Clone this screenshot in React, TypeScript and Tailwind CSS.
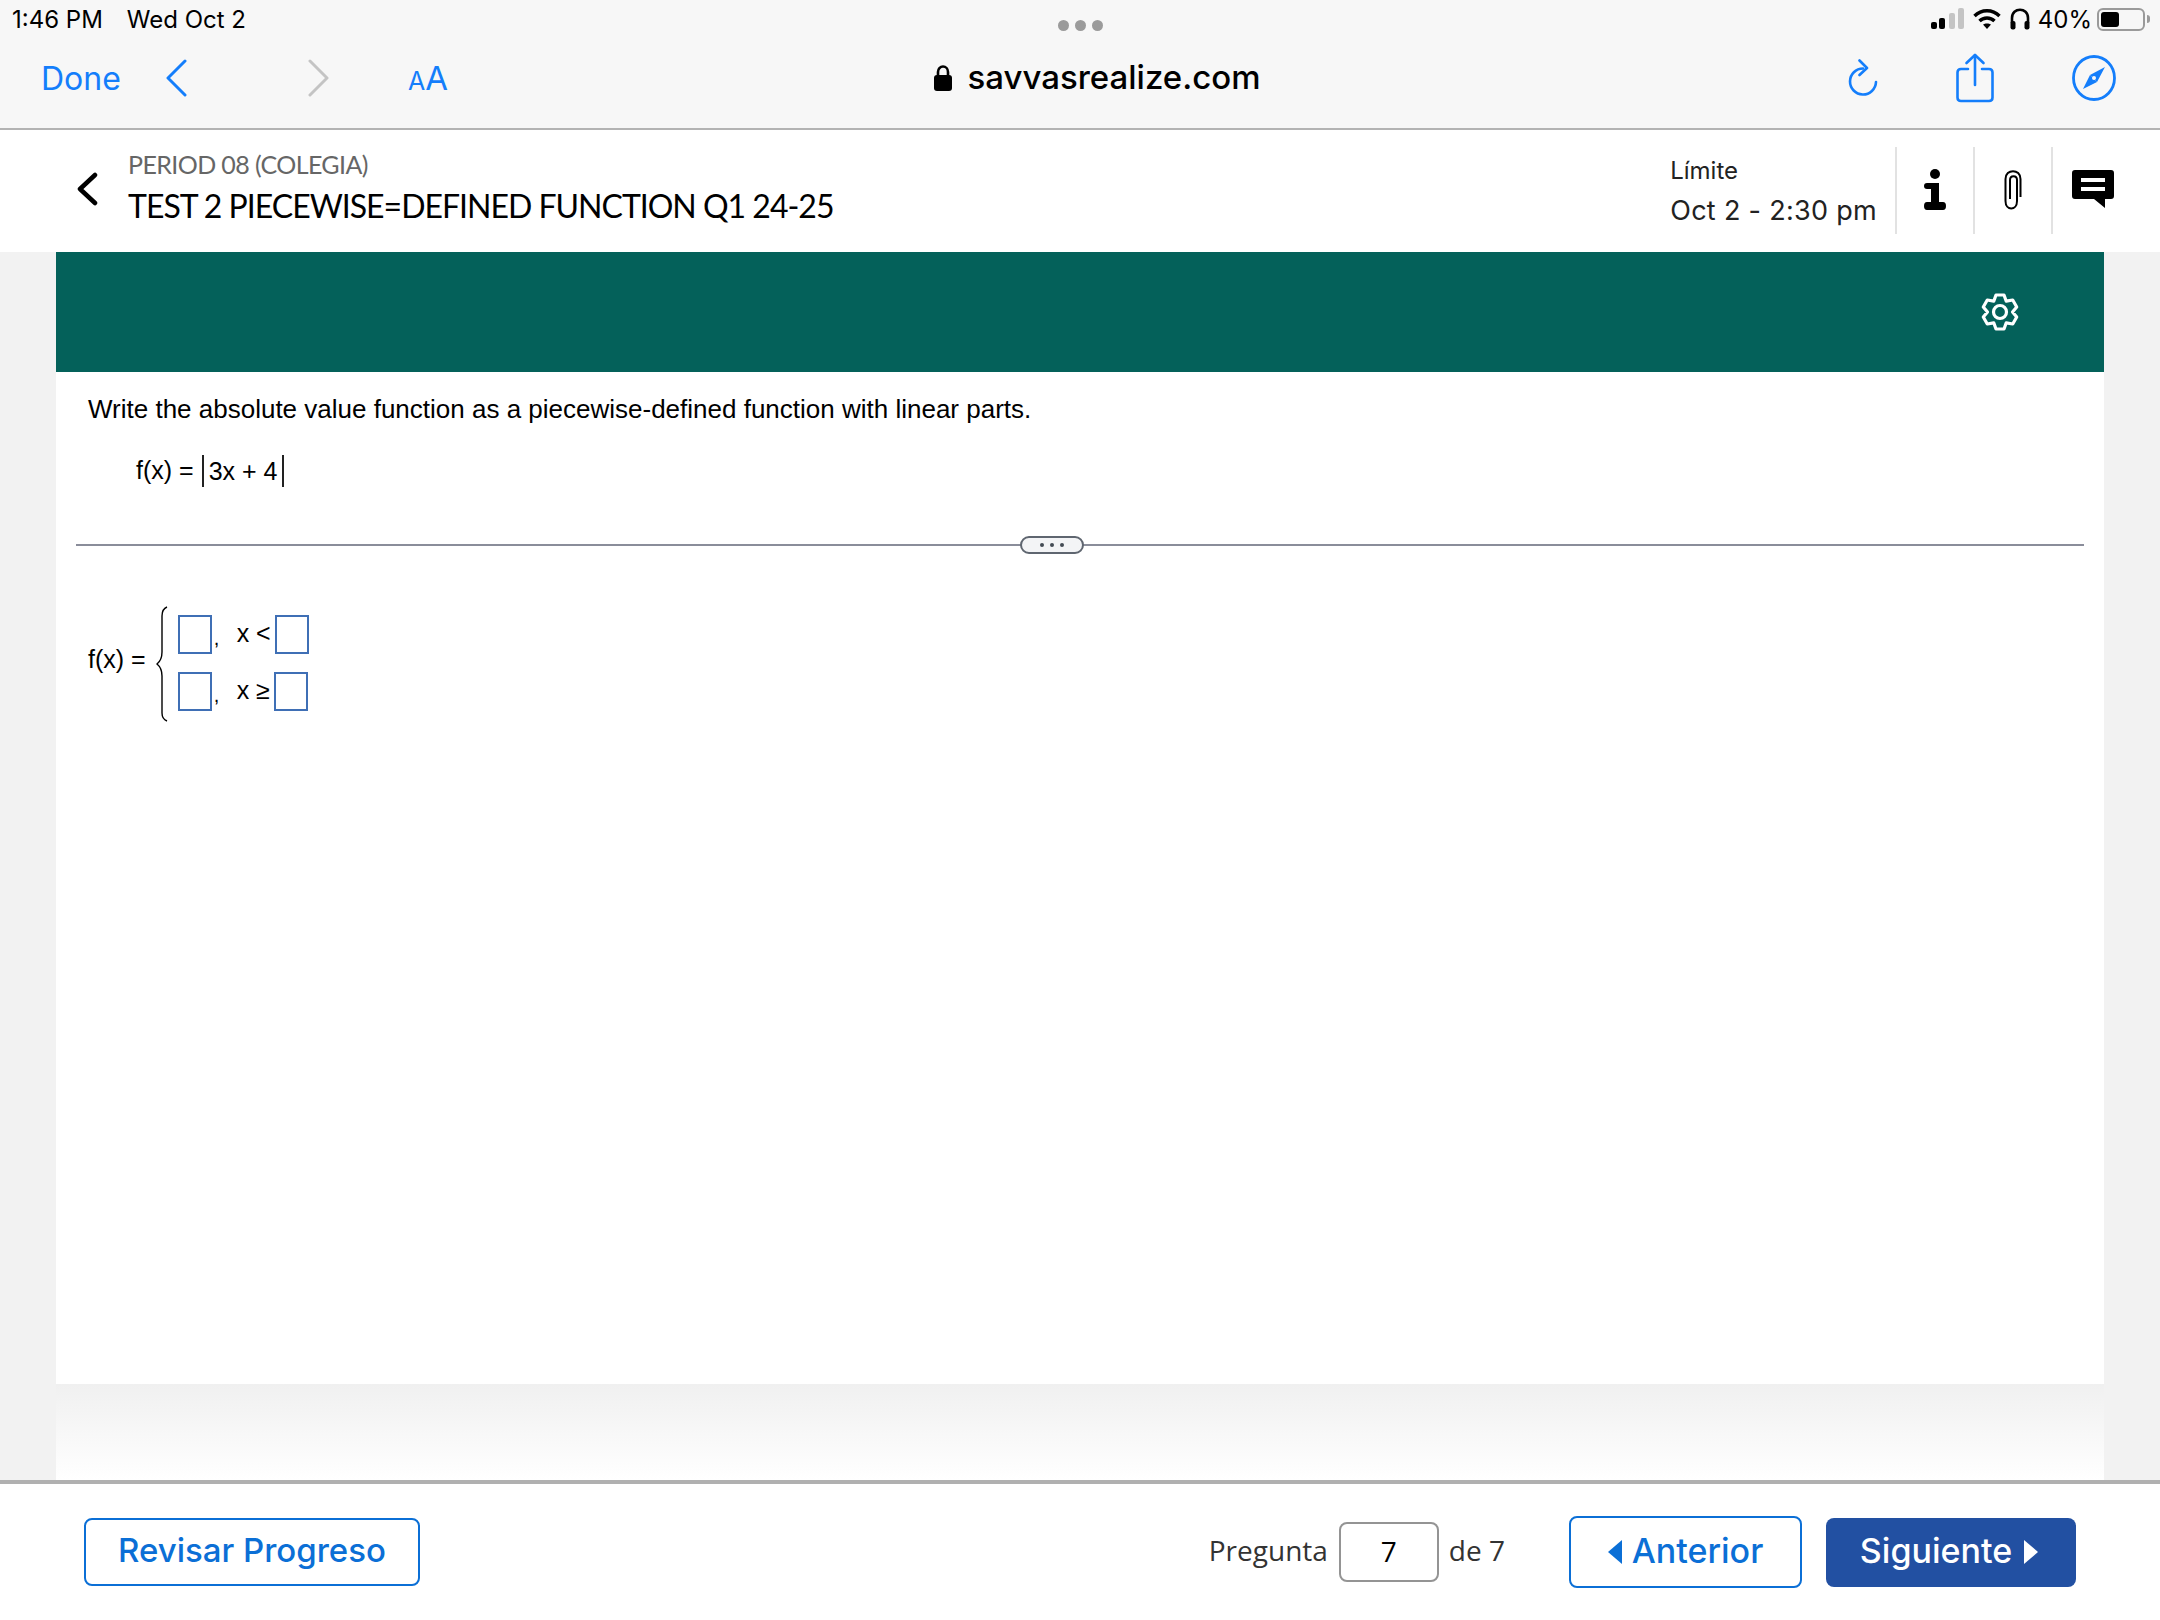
import React from 'react'

const Signal = () => (
  <svg width="33" height="22" viewBox="0 0 33 22">
    <rect x="0" y="14" width="6" height="7" rx="2" fill="#000" />
    <rect x="8" y="10" width="6" height="11" rx="2" fill="#000" />
    <rect x="18" y="5" width="6" height="16" rx="2" fill="#c4c4c4" />
    <rect x="27" y="0" width="6" height="21" rx="2" fill="#c4c4c4" />
  </svg>
)

const Wifi = () => (
  <svg width="28" height="22" viewBox="0 0 28 22" fill="none" stroke="#000" strokeWidth="3.4">
    <path d="M1.5 8 C8.5 1 19.5 1 26.5 8" />
    <path d="M6.5 13 C10.5 9 17.5 9 21.5 13" />
    <path d="M14 21 L10 16.5 C12 15 16 15 18 16.5 Z" fill="#000" stroke="none" />
  </svg>
)

const Headphones = () => (
  <svg width="20" height="22" viewBox="0 0 20 22" fill="none">
    <path d="M2 15 V10 C2 -1 18 -1 18 10 V15" stroke="#000" strokeWidth="2.6" />
    <rect x="0.5" y="13" width="5" height="8.5" rx="2" fill="#000" />
    <rect x="14.5" y="13" width="5" height="8.5" rx="2" fill="#000" />
  </svg>
)

const Battery = () => (
  <div className="-ml-[4px] flex items-center gap-[2px]">
    <div className="h-[23px] w-[48px] rounded-[6px] border-2 border-[#9a9a9a] p-[2px]">
      <div className="h-full w-[18px] rounded-[3px] bg-black" />
    </div>
    <div className="h-[8px] w-[3px] rounded-r-full bg-[#9a9a9a]" />
  </div>
)

const Reload = () => (
  <svg width="30" height="38" viewBox="0 0 30 38" fill="none" stroke="#147efb" strokeWidth="2.6" strokeLinecap="round" strokeLinejoin="round">
    <path d="M15 9.5 A13 13 0 1 0 28 23" />
    <path d="M11.5 1.5 L19 9 L11.5 16" />
  </svg>
)

const Share = () => (
  <svg width="38" height="50" viewBox="0 0 38 50" fill="none" stroke="#147efb" strokeWidth="2.6" strokeLinecap="round" strokeLinejoin="round">
    <path d="M12 16 H5 Q1.5 16 1.5 19.5 V44.5 Q1.5 48 5 48 H33 Q36.500 48 36.500 44.500 V19.500 Q36.500 16 33 16 H26" />
    <path d="M19 32 V2" />
    <path d="M10.500 10 L19 2 L27.500 10" />
  </svg>
)

const Compass = () => (
  <svg width="44" height="46" viewBox="0 0 44 46" fill="none">
    <ellipse cx="22" cy="23" rx="20.500" ry="21.500" stroke="#147efb" strokeWidth="2.8" />
    <path d="M33 12 L25 27 L18 20 Z" fill="#147efb" />
    <path d="M11 34 L18 20 L25 27 Z" fill="#147efb" />
    <circle cx="22" cy="23" r="2" fill="#f7f7f7" />
  </svg>
)

const InfoIcon = () => (
  <svg width="22" height="42" viewBox="0 0 22 42" fill="#000">
    <circle cx="11" cy="5" r="5" />
    <path d="M3 14 H15 V33 H19 Q22 33 22 37 Q22 41 19 41 H3 Q0 41 0 37 Q0 33 3 33 H7 V20 H3 Q0 20 0 17 Q0 14 3 14 Z" />
  </svg>
)

const Clip = () => (
  <svg width="18" height="40" viewBox="0 0 18 40" fill="none" stroke="#000" strokeWidth="2">
    <path d="M16.500 27 V9 C16.500 -1.500 1.500 -1.500 1.500 9 V31 C1.500 41 13 41 13 31 V10 C13 5 6 5 6 10 V29" />
  </svg>
)

const Comment = () => (
  <svg width="42" height="38" viewBox="0 0 42 38">
    <path d="M3 0 H39 Q42 0 42 3 V26 Q42 29 39 29 H33 V38 L22 29 H3 Q0 29 0 26 V3 Q0 0 3 0 Z" fill="#000" />
    <rect x="9" y="8" width="24" height="4" fill="#fff" />
    <rect x="9" y="17" width="24" height="4" fill="#fff" />
  </svg>
)

const Gear = () => (
  <svg width="40" height="42" viewBox="0 0 40 42" fill="none" stroke="#fff" strokeWidth="3.2" strokeLinejoin="round">
    <path d="M16 4 H24 L26.250 10.180 L32.720 9.040 L36.720 15.960 L32.500 21 L36.720 26.040 L32.720 32.960 L26.250 31.820 L24 38 H16 L13.750 31.820 L7.280 32.960 L3.280 26.040 L7.500 21 L3.280 15.960 L7.280 9.040 L13.750 10.180 Z" />
    <circle cx="20" cy="21" r="6.500" />
  </svg>
)

const Brace = () => (
  <svg width="12" height="116" viewBox="0 0 12 116" fill="none" stroke="#000" strokeWidth="1.4">
    <path d="M11 1 Q6 3 6 10 V46 Q6 54 1 58 Q6 62 6 70 V107 Q6 113 11 115" />
  </svg>
)

const AnswerBox = () => <div className="h-[39px] w-[34px] border-2 border-[#3f6fb5] bg-white" />

const App = () => {
  return (
    <div className="flex h-[1620px] w-[2160px] flex-col overflow-hidden bg-white font-['Inter',sans-serif]">
      {/* safari chrome */}
      <div className="h-[130px] shrink-0 border-b-2 border-[#b3b3b3] bg-[#f7f7f7]">
        <div className="grid h-[38px] grid-cols-3 items-center pl-[12px] pr-[10px] text-[24px] text-black">
          <div className="flex gap-[24px] pt-[1px]">
            <span>1:46 PM</span>
            <span>Wed Oct 2</span>
          </div>
          <div className="flex justify-center gap-[6px] pt-[12px]">
            <span className="h-[11px] w-[11px] rounded-full bg-[#9b9b9b]" />
            <span className="h-[11px] w-[11px] rounded-full bg-[#9b9b9b]" />
            <span className="h-[11px] w-[11px] rounded-full bg-[#9b9b9b]" />
          </div>
          <div className="flex items-center justify-end gap-[9px]">
            <Signal />
            <Wifi />
            <Headphones />
            <span className="-ml-[1px] pt-[1px]">40%</span>
            <Battery />
          </div>
        </div>
        <div className="grid h-[80px] grid-cols-3 items-center pl-[41px] pr-[44px]">
          <div className="flex items-center text-[#147efb]">
            <span className="w-[124px] pt-[2px] text-[32px]">Done</span>
            <svg width="22" height="38" viewBox="0 0 22 38" fill="none" stroke="#147efb" strokeWidth="3" strokeLinecap="round" strokeLinejoin="round">
              <path d="M20 2 L3 19 L20 36" />
            </svg>
            <svg className="ml-[121px]" width="22" height="38" viewBox="0 0 22 38" fill="none" stroke="#c4c4c4" strokeWidth="3" strokeLinecap="round" strokeLinejoin="round">
              <path d="M2 2 L19 19 L2 36" />
            </svg>
            <span className="ml-[78px] flex items-baseline leading-none">
              <span className="text-[25px]">A</span>
              <span className="text-[33px]">A</span>
            </span>
          </div>
          <div className="flex items-center justify-center gap-[15px] pl-[38px] text-[33px] font-medium text-black">
            <svg width="18" height="26" viewBox="0 0 18 26">
              <path d="M4 11 V7 a5 5.500 0 0 1 10 0 V11" fill="none" stroke="#000" strokeWidth="2.6" />
              <rect x="0" y="10" width="18" height="16" rx="3" fill="#000" />
            </svg>
            <span>savvasrealize.com</span>
          </div>
          <div className="flex items-center justify-end gap-[78px]">
            <Reload />
            <Share />
            <Compass />
          </div>
        </div>
      </div>

      {/* assessment header */}
      <header className="flex h-[122px] shrink-0 items-center bg-white">
        <svg className="ml-[76px] -mt-[4px]" width="22" height="34" viewBox="0 0 22 34" fill="none" stroke="#000" strokeWidth="4.5" strokeLinecap="round" strokeLinejoin="round">
          <path d="M19 3 L4 17 L19 31" />
        </svg>
        <div className="ml-[30px] mb-[10px] flex flex-1 flex-col font-['Lato',sans-serif]">
          <span className="text-[25px] leading-[40px] tracking-[-0.6px] text-[#666666]">PERIOD 08 (COLEGIA)</span>
          <span className="text-[32px] leading-[44px] tracking-[-1px] text-black">TEST 2 PIECEWISE=DEFINED FUNCTION Q1 24-25</span>
        </div>
        <div className="mb-[10px] flex flex-col pr-[18px] text-[#222222]">
          <span className="text-[24px] leading-[50px]">Límite</span>
          <span className="text-[27px] leading-[30px] tracking-[0.3px]">Oct 2 - 2:30 pm</span>
        </div>
        <div className="flex h-[87px] -mt-[2px] w-[78px] items-center justify-center border-l-2 border-[#e2e2e2]">
          <InfoIcon />
        </div>
        <div className="flex h-[87px] -mt-[2px] w-[78px] items-center justify-center border-l-2 border-[#e2e2e2]">
          <Clip />
        </div>
        <div className="flex h-[87px] -mt-[2px] w-[109px] items-center border-l-2 border-[#e2e2e2] pb-[2px] pl-[19px]">
          <Comment />
        </div>
      </header>

      <main className="flex min-h-0 flex-1 flex-col bg-[#f2f2f2] px-[56px]">
        <div className="flex h-[120px] shrink-0 items-center justify-end bg-[#04615a] pr-[84px]">
          <Gear />
        </div>
        <section className="flex h-[1012px] shrink-0 flex-col bg-white font-['Liberation_Sans',sans-serif] text-black">
          <p className="ml-[32px] mt-[20px] text-[26px] leading-[34px]">Write the absolute value function as a piecewise-defined function with linear parts.</p>
          <div className="ml-[80px] mt-[27px] flex h-[36px] items-center text-[25px]">
            <span>f(x) =</span>
            <span className="ml-[8px] border-x-2 border-[#222222] px-[5px] leading-[32px]">3x + 4</span>
          </div>
          <div className="relative ml-[20px] mr-[20px] mt-[55px] border-t-2 border-[#8a8d9a]">
            <div className="absolute left-[944px] top-[-10px] flex h-[18px] w-[64px] items-center justify-center gap-[6px] rounded-full border-2 border-[#5f6670] bg-[#f3f4f6]">
              <span className="h-[4px] w-[4px] rounded-full bg-[#444b54]" />
              <span className="h-[4px] w-[4px] rounded-full bg-[#444b54]" />
              <span className="h-[4px] w-[4px] rounded-full bg-[#444b54]" />
            </div>
          </div>
          <div className="ml-[32px] mt-[60px] flex items-center text-[25px]">
            <span className="mb-[8px]">f(x) =</span>
            <span className="ml-[10px]"><Brace /></span>
            <div className="mb-[3px] ml-[10px] flex flex-col gap-[18px]">
              <div className="flex items-center">
                <AnswerBox />
                <span className="ml-[2px] w-[23px] pt-[8px] text-[20px]">,</span>
                <span className="w-[38px]">x &lt;</span>
                <AnswerBox />
              </div>
              <div className="flex items-center">
                <AnswerBox />
                <span className="ml-[2px] w-[23px] pt-[8px] text-[20px]">,</span>
                <span className="w-[37px]">x ≥</span>
                <AnswerBox />
              </div>
            </div>
          </div>
        </section>
        <div className="flex-1 bg-gradient-to-b from-[#f0f0f0] to-white" />
      </main>

      {/* footer nav */}
      <footer className="flex h-[140px] shrink-0 items-center border-t-4 border-[#b0b0b0] bg-white pl-[84px] pr-[84px]">
        <button className="h-[68px] w-[336px] rounded-[8px] border-2 border-[#0b6fd6] pb-[3px] text-[33px] font-medium text-[#0b6fd6]">Revisar Progreso</button>
        <div className="ml-auto flex items-center font-['Open_Sans',sans-serif] text-[28px] text-[#333333]">
          <span className="pb-[5px]">Pregunta</span>
          <div className="ml-[11px] flex h-[60px] w-[100px] items-center justify-center rounded-[8px] border-2 border-[#949494] pb-[3px] text-black">7</div>
          <span className="ml-[10px] pb-[5px]">de 7</span>
        </div>
        <button className="ml-[64px] flex h-[72px] w-[233px] items-center justify-center gap-[10px] rounded-[8px] border-2 border-[#0b6fd6] pb-[3px] text-[34px] font-medium text-[#0b6fd6]">
          <svg width="14" height="24" viewBox="0 0 14 24" fill="currentColor" className="mt-[3px]"><path d="M14 0 V24 L0 12 Z" /></svg>
          Anterior
        </button>
        <button className="ml-[24px] flex h-[69px] w-[250px] items-center justify-center gap-[12px] rounded-[8px] bg-[#2250a2] pb-[3px] pr-[4px] text-[34px] font-medium text-white">
          Siguiente
          <svg width="14" height="24" viewBox="0 0 14 24" fill="currentColor" className="mt-[3px]"><path d="M0 0 V24 L14 12 Z" /></svg>
        </button>
      </footer>
    </div>
  )
}

export default App
